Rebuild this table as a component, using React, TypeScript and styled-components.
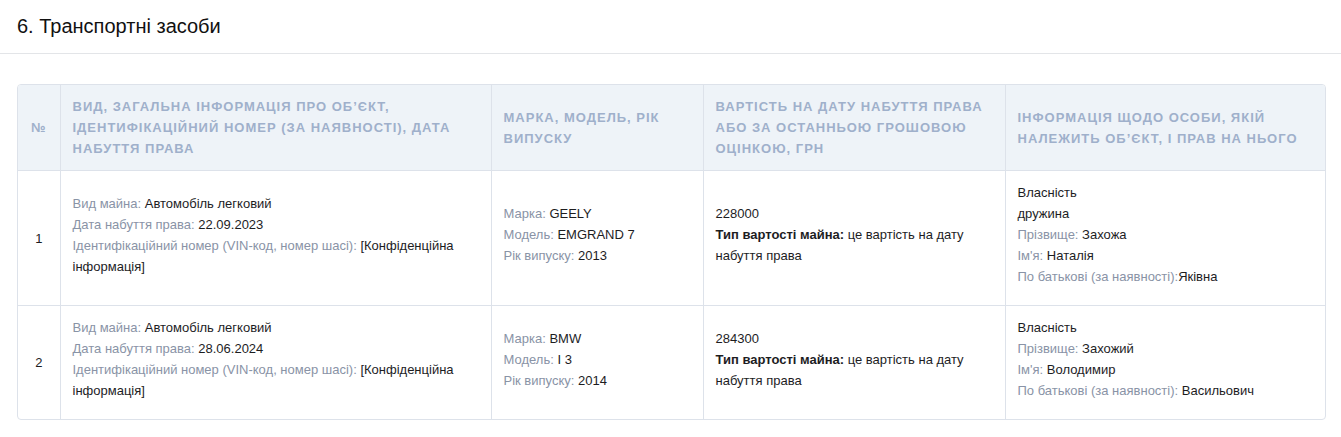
import { createGlobalStyle } from 'styled-components';
import styled from 'styled-components';

const GlobalStyle = createGlobalStyle`
    html, body {
        margin: 0;
        padding: 0;
        background: #ffffff;
        font-family: 'Liberation Sans', Arial, sans-serif;
        color: #1d1d1f;
    }
`;

const Header = styled.header`
    height: 53px;
    border-bottom: 1px solid #e3e5e8;
    padding: 0 17px;
    display: flex;
    align-items: center;
`;

const Title = styled.h1`
    margin: 0;
    font-size: 20px;
    font-weight: 400;
    color: #111;
`;

const Content = styled.section`
    padding: 30px 15px 0 17px;
`;

const TableWrap = styled.div`
    border: 1px solid #dde2ea;
    border-radius: 4px;
    overflow: hidden;
`;

const Table = styled.table`
    width: 100%;
    border-collapse: collapse;
    table-layout: fixed;
`;

const Th = styled.th<{ $center?: boolean }>`
    background: #eef3f8;
    color: #9fb0cb;
    font-size: 13px;
    font-weight: 700;
    text-transform: uppercase;
    letter-spacing: 1px;
    line-height: 21px;
    text-align: ${(p) => (p.$center ? 'center' : 'left')};
    vertical-align: middle;
    padding: 11px 12px;
    border-right: 1px solid #dde2ea;
    border-bottom: 1px solid #dde2ea;

    &:last-child {
        border-right: none;
    }
`;

const Td = styled.td<{ $center?: boolean }>`
    font-size: 13px;
    line-height: 21px;
    color: #1d1d1f;
    text-align: ${(p) => (p.$center ? 'center' : 'left')};
    vertical-align: middle;
    padding: 11px 12px;
    border-right: 1px solid #dde2ea;
    border-bottom: 1px solid #dde2ea;

    &:last-child {
        border-right: none;
    }

    tr:last-child > & {
        border-bottom: none;
    }
`;

const Block = styled.div`
    margin-bottom: 7px;
`;

const Line = styled.div``;

const Label = styled.span`
    color: #8993a6;
`;

const Strong = styled.b`
    font-weight: 700;
`;

type Vehicle = {
    n: number;
    date: string;
    brand: string;
    model: string;
    year: string;
    cost: string;
    owner: { relation?: string; last: string; first: string; middle: string; tight?: boolean };
};

const vehicles: Vehicle[] = [
    {
        n: 1,
        date: '22.09.2023',
        brand: 'GEELY',
        model: 'EMGRAND 7',
        year: '2013',
        cost: '228000',
        owner: { relation: 'дружина', last: 'Захожа', first: 'Наталія', middle: 'Яківна', tight: true },
    },
    {
        n: 2,
        date: '28.06.2024',
        brand: 'BMW',
        model: 'I 3',
        year: '2014',
        cost: '284300',
        owner: { last: 'Захожий', first: 'Володимир', middle: 'Васильович' },
    },
];

export default function App() {
    return (
        <>
            <GlobalStyle />
            <Header>
                <Title>6. Транспортні засоби</Title>
            </Header>
            <Content>
                <TableWrap>
                    <Table>
                        <colgroup>
                            <col style={{ width: 42 }} />
                            <col style={{ width: 431 }} />
                            <col style={{ width: 212 }} />
                            <col style={{ width: 302 }} />
                            <col />
                        </colgroup>
                        <thead>
                            <tr>
                                <Th $center>№</Th>
                                <Th>Вид, загальна інформація про об’єкт, ідентифікаційний номер (за наявності), дата набуття права</Th>
                                <Th>Марка, модель, рік випуску</Th>
                                <Th>Вартість на дату набуття права або за останньою грошовою оцінкою, грн</Th>
                                <Th>Інформація щодо особи, якій належить об’єкт, і прав на нього</Th>
                            </tr>
                        </thead>
                        <tbody>
                            {vehicles.map((v) => (
                                <tr key={v.n}>
                                    <Td $center>{v.n}</Td>
                                    <Td>
                                        <Block>
                                            <Line><Label>Вид майна:</Label> Автомобіль легковий</Line>
                                            <Line><Label>Дата набуття права:</Label> {v.date}</Line>
                                            <Line><Label>Ідентифікаційний номер (VIN-код, номер шасі):</Label> [Конфіденційна інформація]</Line>
                                        </Block>
                                    </Td>
                                    <Td>
                                        <Block>
                                            <Line><Label>Марка:</Label> {v.brand}</Line>
                                            <Line><Label>Модель:</Label> {v.model}</Line>
                                            <Line><Label>Рік випуску:</Label> {v.year}</Line>
                                        </Block>
                                    </Td>
                                    <Td>
                                        <Block>
                                            <Line>{v.cost}</Line>
                                            <Line><Strong>Тип вартості майна:</Strong> це вартість на дату набуття права</Line>
                                        </Block>
                                    </Td>
                                    <Td>
                                        <Block>
                                            <Line>Власність</Line>
                                            {v.owner.relation && <Line>{v.owner.relation}</Line>}
                                            <Line><Label>Прізвище:</Label> {v.owner.last}</Line>
                                            <Line><Label>Ім'я:</Label> {v.owner.first}</Line>
                                            <Line>
                                                <Label>По батькові (за наявності):</Label>
                                                {v.owner.tight ? '' : ' '}
                                                {v.owner.middle}
                                            </Line>
                                        </Block>
                                    </Td>
                                </tr>
                            ))}
                        </tbody>
                    </Table>
                </TableWrap>
            </Content>
        </>
    );
}
